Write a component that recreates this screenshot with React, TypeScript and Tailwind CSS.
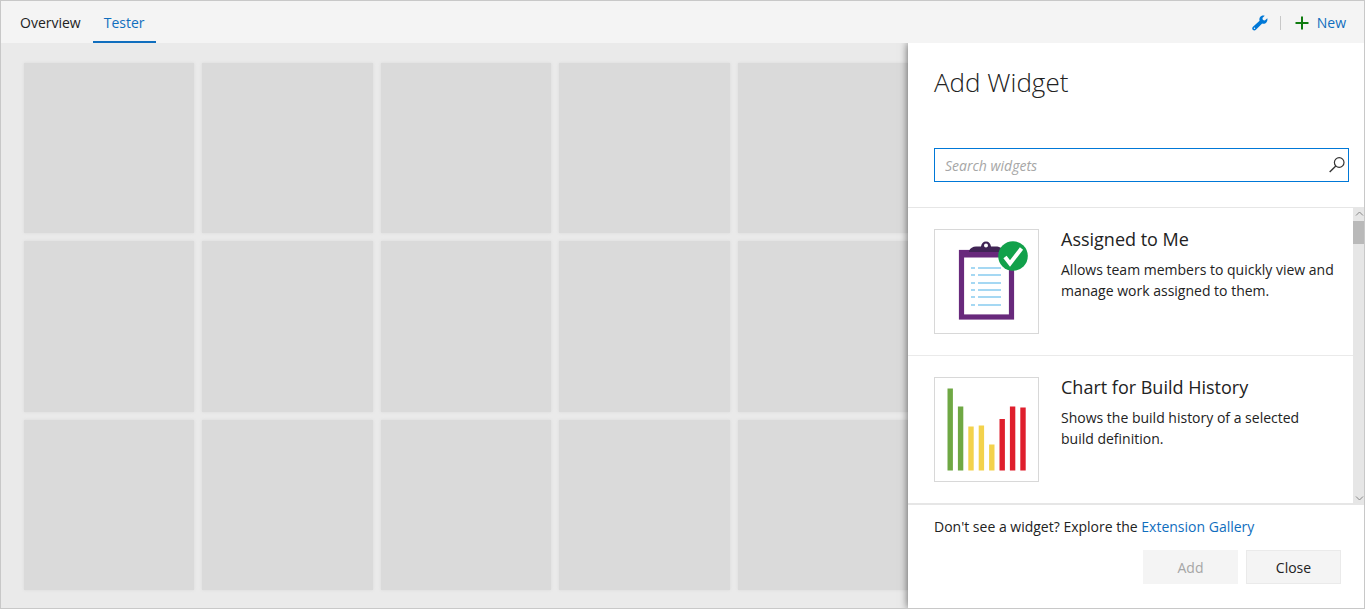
import React from "react";

type Widget = {
  title: string;
  description: string;
  art: React.ReactNode;
};

function ClipboardArt() {
  const rows = [38, 45, 53, 60, 67, 75];
  return (
    <svg viewBox="0 0 103 103" className="size-full" aria-hidden="true">
      <rect x="26.500" y="22.500" width="50" height="64.500" fill="#fff" stroke="#68297c" strokeWidth="5.200" />
      <path d="M24 20h55v7.500H24z" fill="#68297c" />
      <path
        d="M34 22v-1c1-3 4-4.500 7-4.500h5c.5-3 2-5 5-5s4.500 2 5 5h5c3 0 7 1.500 8 4.500v1zM51 13.600a2 2 0 1 0 0 4a2 2 0 1 0 0-4z"
        fill="#402455"
        fillRule="evenodd"
      />
      {rows.map((y) => (
        <path key={y} d={`M36 ${y}h4M43 ${y}h23`} stroke="#a5d8f3" strokeWidth="2.200" />
      ))}
      <circle cx="78" cy="26" r="14.800" fill="#12a14b" />
      <path d="M70 27l5 6.500L86.500 18.500" fill="none" stroke="#fff" strokeWidth="4" />
    </svg>
  );
}

function BuildHistoryArt() {
  const bars = [
    { x: 12.5, top: 10.5, color: "#6fa844" },
    { x: 22.9, top: 28.5, color: "#6fa844" },
    { x: 33.3, top: 48.5, color: "#f3d24c" },
    { x: 43.7, top: 47.5, color: "#f3d24c" },
    { x: 54.1, top: 66.5, color: "#f3d24c" },
    { x: 64.5, top: 41, color: "#df1f2d" },
    { x: 74.9, top: 28.5, color: "#df1f2d" },
    { x: 85.3, top: 29.5, color: "#df1f2d" },
  ];
  return (
    <svg viewBox="0 0 103 103" className="size-full" aria-hidden="true">
      {bars.map((b) => (
        <rect key={b.x} x={b.x} y={b.top} width="5.400" height={92.5 - b.top} fill={b.color} />
      ))}
    </svg>
  );
}

const widgets: Widget[] = [
  {
    title: "Assigned to Me",
    description: "Allows team members to quickly view and manage work assigned to them.",
    art: <ClipboardArt />,
  },
  {
    title: "Chart for Build History",
    description: "Shows the build history of a selected build definition.",
    art: <BuildHistoryArt />,
  },
];

function Header() {
  return (
    <header className="flex h-[42px] shrink-0 items-stretch justify-between bg-[#f4f4f4]">
      <nav className="flex gap-px pl-2">
        <a href="#overview" className="flex items-center border-b-2 border-transparent px-[11px] pt-1 text-[#222]">
          Overview
        </a>
        <a href="#tester" className="flex items-center border-b-2 border-[#106ebe] px-[11px] pt-1 text-[#106ebe]">
          Tester
        </a>
      </nav>
      <div className="flex items-center pt-0.5 pr-[18px]">
        <button type="button" aria-label="Manage dashboards" className="text-[#0078d7]">
          <svg viewBox="0 0 16 16" className="size-4" fill="currentColor" aria-hidden="true">
            <path d="M15.300 3.200l-2.500 2.300-1.900-.5-.5-1.900L12.700.7C10.800.1 8.900.8 8 2.200c-.7 1.100-.8 2.400-.4 3.600L1 11.700c-1 1-1 2.300-.2 3.100.9.900 2.200.9 3.100-.1l6.300-6.200c1.500.5 3.200.1 4.300-1.300 1-1.100 1.100-2.700.8-4zM2.500 14a.7.7 0 1 1 0-1.400.7.7 0 0 1 0 1.400z" />
          </svg>
        </button>
        <span className="mr-3.5 ml-3 h-3.5 w-px bg-[#c8c8c8]" />
        <button type="button" className="flex items-center gap-2 text-[#106ebe]">
          <svg viewBox="0 0 14 14" className="size-3.5" stroke="#107c10" strokeWidth="2" aria-hidden="true">
            <path d="M7 0.500v13M0.500 7h13" />
          </svg>
          New
        </button>
      </div>
    </header>
  );
}

function Board() {
  return (
    <main className="min-w-0 flex-1 bg-[#eaeaea] pt-5 pl-[23px]">
      <div className="grid grid-cols-5 gap-2">
        {Array.from({ length: 15 }, (_, i) => (
          <div key={i} className="aspect-square bg-[#dadada] shadow-[0_0_3px_#dadada]" />
        ))}
      </div>
    </main>
  );
}

function ScrollTrack() {
  return (
    <div className="flex w-[11px] shrink-0 flex-col items-center bg-[#e6e6e6]" aria-hidden="true">
      <svg viewBox="0 0 11 13" className="h-[13px] w-[11px] shrink-0" fill="none" stroke="#888">
        <path d="M3 7.500l3.500-3.500L10 7.500" />
      </svg>
      <div className="h-[23px] w-full bg-[#b9b9b9]" />
      <svg viewBox="0 0 11 13" className="mt-auto h-[13px] w-[11px] shrink-0" fill="none" stroke="#888">
        <path d="M3 4.500L6.500 8 10 4.500" />
      </svg>
    </div>
  );
}

function AddWidgetPanel() {
  return (
    <aside className="relative flex w-[456px] shrink-0 flex-col bg-white shadow-[0_0_8px_rgba(0,0,0,0.6)]">
      <div className="pt-[22px] pr-[15px] pb-[25px] pl-[26px]">
        <h1 className="text-[26px] leading-[35px] font-light text-[#222]">Add Widget</h1>
        <div className="mt-12 flex h-[34px] items-center border border-[#0078d7] pr-[3px] pl-2.5">
          <input
            type="text"
            aria-label="Search widgets"
            placeholder="Search widgets"
            className="min-w-0 flex-1 pt-0.5 outline-none placeholder:text-[#a6a6a6] placeholder:italic"
          />
          <button type="button" aria-label="Search" className="text-[#333]">
            <svg viewBox="0 0 16 16" className="size-4" fill="none" stroke="currentColor" strokeWidth="1.200" aria-hidden="true">
              <circle cx="10.200" cy="5.500" r="4.800" />
              <path d="M6.800 9L0.700 15" strokeWidth="1.400" />
            </svg>
          </button>
        </div>
      </div>

      <div className="flex flex-1 border-t border-[#e6e6e6]">
        <ul className="min-w-0 flex-1 border-b-2 border-[#e6e6e6]">
          {widgets.map((w) => (
            <li key={w.title} className="flex gap-[22px] border-b border-[#eaeaea] py-[21px] pr-[18px] pl-[26px] last:border-b-0">
              <div className="size-[105px] shrink-0 border border-[#d8d8d8]">{w.art}</div>
              <div className="text-[#222]">
                <h2 className="text-lg leading-5">{w.title}</h2>
                <p className="mt-2.5 leading-[21px]">{w.description}</p>
              </div>
            </li>
          ))}
        </ul>
        <ScrollTrack />
      </div>

      <footer className="pt-3 pr-[23px] pb-6 pl-[26px] text-[#222]">
        <p className="leading-5">
          Don't see a widget? Explore the{" "}
          <a href="#gallery" className="text-[#106ebe]">
            Extension Gallery
          </a>
        </p>
        <div className="mt-[13px] flex justify-end gap-2">
          <button type="button" disabled className="h-[34px] w-[95px] bg-[#f4f4f4] pt-0.5 text-[#a6a6a6]">
            Add
          </button>
          <button type="button" className="h-[34px] w-[95px] border border-[#eaeaea] bg-[#f4f4f4] pt-0.5">
            Close
          </button>
        </div>
      </footer>
    </aside>
  );
}

export default function App() {
  return (
    <div className="flex min-h-screen flex-col border border-[#c8c8c8] bg-[#eaeaea] font-['Open_Sans','Noto_Sans',sans-serif] text-sm">
      <Header />
      <div className="flex flex-1 overflow-hidden">
        <Board />
        <AddWidgetPanel />
      </div>
    </div>
  );
}
